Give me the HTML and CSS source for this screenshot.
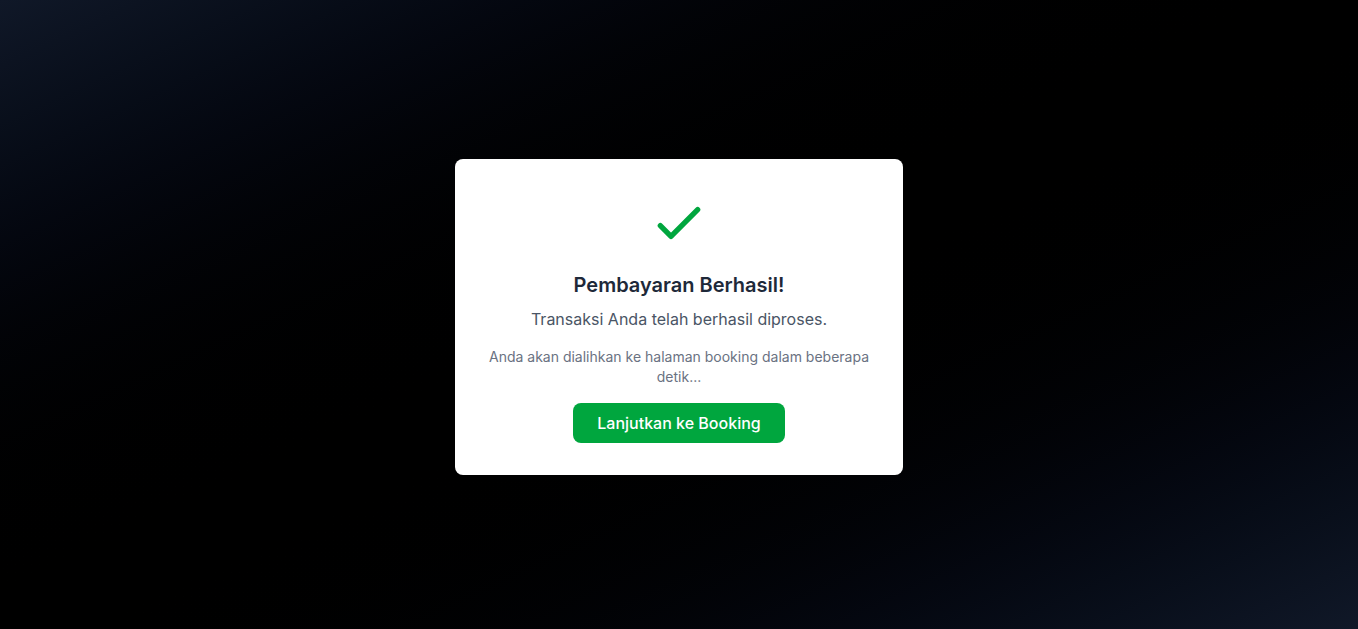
FILE: index.html
```html
<!DOCTYPE html>
<html lang="id">
<head>
<meta charset="utf-8">
<title>Pembayaran Berhasil</title>
<link rel="stylesheet" href="styles.css">
</head>
<body>
<main class="page">
  <section class="card">
    <svg class="check" viewBox="0 0 24 24" fill="none" stroke="currentColor" stroke-width="2" stroke-linecap="round" stroke-linejoin="round" aria-hidden="true">
      <path d="M5 13l4 4L19 7"/>
    </svg>
    <h1 class="title">Pembayaran Berhasil!</h1>
    <p class="subtitle">Transaksi Anda telah berhasil diproses.</p>
    <p class="note">Anda akan dialihkan ke halaman booking dalam beberapa detik...</p>
    <button class="btn" type="button">Lanjutkan ke Booking</button>
  </section>
</main>
</body>
</html>
```
FILE: styles.css
```css
* { box-sizing: border-box; }
html, body { margin: 0; padding: 0; height: 100%; }
body {
  font-family: Inter, "Noto Sans", "Liberation Sans", sans-serif;
  background: linear-gradient(to bottom right in oklab, #101828, #000000 50%, #101828);
  min-height: 100vh;
}
.page {
  min-height: 100vh;
  display: flex;
  align-items: center;
  justify-content: center;
  padding-top: 5px;
}
.card {
  width: 448px;
  background: #ffffff;
  border-radius: 8px;
  padding: 32px;
  display: flex;
  flex-direction: column;
  align-items: center;
  text-align: center;
}
.check {
  width: 64px;
  height: 64px;
  color: #00a63e;
  margin-bottom: 16px;
  display: block;
}
.title {
  margin: 0 0 8px;
  font-size: 20px;
  line-height: 28px;
  font-weight: 600;
  color: #1e2939;
}
.subtitle {
  margin: 0 0 16px;
  font-size: 16px;
  line-height: 24px;
  color: #4a5565;
}
.note {
  margin: 0;
  font-size: 14px;
  line-height: 20px;
  color: #6a7282;
}
.btn {
  margin-top: 16px;
  background: #00a63e;
  color: #ffffff;
  border: 0;
  border-radius: 8px;
  padding: 8px 24px;
  font-family: inherit;
  font-size: 16px;
  line-height: 24px;
  font-weight: 500;
  cursor: pointer;
}
```
